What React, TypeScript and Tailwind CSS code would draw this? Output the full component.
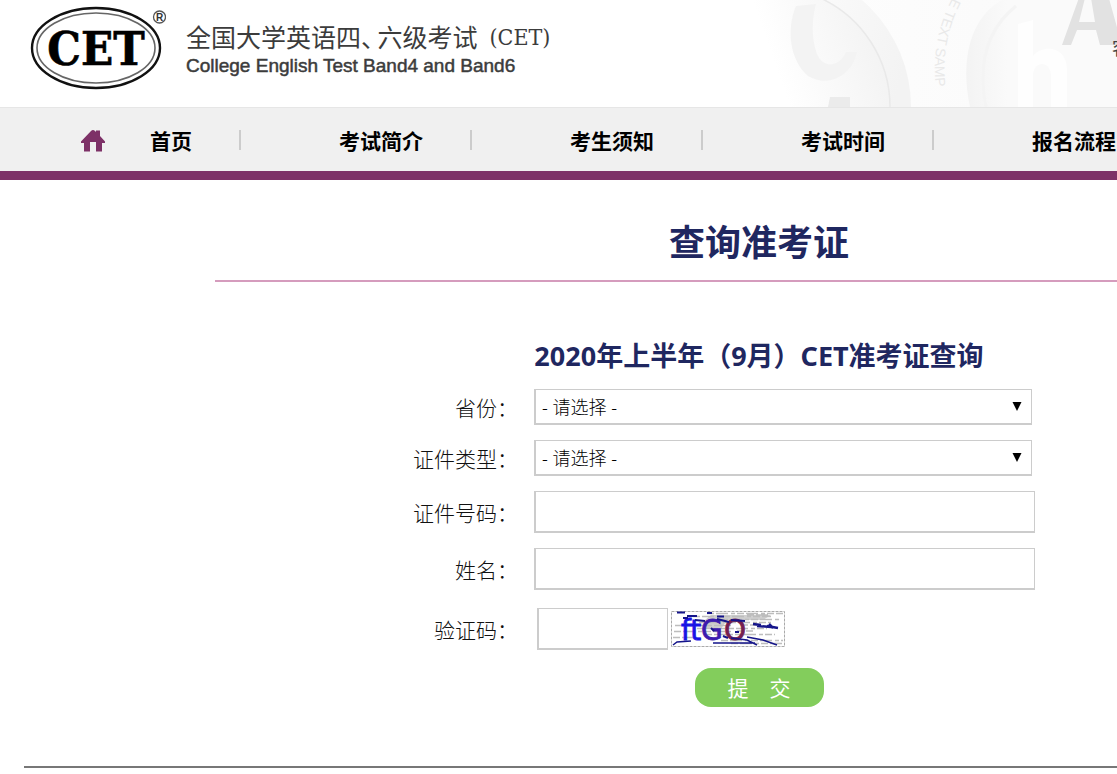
import type { ReactNode } from "react";

const NAV = ["考试简介", "考生须知", "考试时间", "报名流程"];

function Logo() {
  return (
    <svg viewBox="0 0 136 86" className="h-[86px] w-[136px] shrink-0" role="img" aria-label="CET">
      <ellipse cx="66" cy="43" rx="64" ry="40" fill="#fff" stroke="#111" strokeWidth="2.4" />
      <ellipse cx="66" cy="43" rx="59" ry="35" fill="none" stroke="#666" strokeWidth="1.6" />
      <text
        x="66"
        y="60"
        textAnchor="middle"
        fill="#000"
        stroke="#000"
        strokeWidth="0.6"
        className="font-['DejaVu_Serif_Condensed','DejaVu_Serif',serif] text-[47px] font-bold"
      >
        CET
      </text>
      <circle cx="129.5" cy="12" r="6" fill="#fff" stroke="#555" strokeWidth="1.3" />
      <text x="129.5" y="15.5" textAnchor="middle" fill="#333" className="font-['Liberation_Sans',sans-serif] text-[10px] font-bold">
        R
      </text>
    </svg>
  );
}

function HeaderArt() {
  return (
    <svg viewBox="0 0 417 107" className="absolute top-0 left-[700px] h-[107px] w-[417px]" aria-hidden="true">
      <defs>
        <linearGradient id="wash" x1="0" x2="1">
          <stop offset="0" stopColor="#fff" />
          <stop offset="0.5" stopColor="#fcfcfc" />
          <stop offset="1" stopColor="#f9f9f9" />
        </linearGradient>
        <linearGradient id="rim" gradientUnits="userSpaceOnUse" x1="50" x2="211" y1="0" y2="40">
          <stop offset="0" stopColor="#fff" />
          <stop offset="1" stopColor="#f3f3f3" />
        </linearGradient>
        <linearGradient id="disc" gradientUnits="userSpaceOnUse" x1="80" x2="195" y1="80" y2="40">
          <stop offset="0" stopColor="#fff" />
          <stop offset="1" stopColor="#f1f1f1" />
        </linearGradient>
        <linearGradient id="ringFill" gradientUnits="userSpaceOnUse" x1="265" x2="350" y1="0" y2="0">
          <stop offset="0" stopColor="#f3f3f3" />
          <stop offset="0.5" stopColor="#fafafa" />
          <stop offset="1" stopColor="#fafafa" />
        </linearGradient>
        <path id="ring" d="M281 -40 A150 150 0 0 0 246 125" />
      </defs>
      <rect width="417" height="107" fill="url(#wash)" />
      <circle cx="70" cy="107" r="141" fill="url(#rim)" />
      <circle cx="70" cy="107" r="120" fill="url(#disc)" />
      <path d="M118 -3 A120 120 0 0 1 190 107" fill="none" stroke="#e9e9e9" strokeWidth="1.5" />
      <path d="M96 6 C86 30 90 60 108 76 C128 88 152 76 157 52 L146 52 C140 66 124 70 117 54 C111 38 112 18 116 4 Z" fill="#f3f3f3" />
      <path d="M130 97h20v10h-22z" fill="#ebebeb" />
      <path d="M270 107 C260 60 270 18 302 0 H417 V107 Z" fill="url(#ringFill)" />
      <path d="M286 107 C278 66 286 30 316 6" fill="none" stroke="#f4f4f4" strokeWidth="3" />
      <path d="M318 24v83h15V76c0-16 18-16 18 0v31h16V70c0-24-24-26-34-14V20z" fill="#fefefe" />
      <text fill="#e9e9e9" className="font-['Liberation_Sans',sans-serif] text-[14px]">
        <textPath href="#ring">SAMPLE TEXT SAMP</textPath>
      </text>
      <path d="M362 45 L380 -5 H408 L422 45 H400 L396 30 H377 L371 45 Z M379 22 L385 -2 H391 L395 22 Z" fill="#e2e2e2" fillRule="evenodd" />
    </svg>
  );
}

function HomeIcon() {
  return (
    <svg viewBox="0 0 24 22" className="h-[22px] w-6 shrink-0" fill="#7d3167" aria-hidden="true">
      <path d="M0 11.5 L10 1 Q12 -0.8 14 1 L15 2 V0.5 H19 V6 L24 11.5 V13 H21 V21.5 H15 V12 H9 V21.5 H3 V13 H0 Z" />
    </svg>
  );
}

function Captcha() {
  return (
    <svg viewBox="0 0 114 36" className="h-9 w-[114px] shrink-0" role="img" aria-label="ftGO">
      <rect x="0.5" y="0.5" width="113" height="35" fill="#fff" stroke="#aaa" strokeDasharray="3 1" />
      <path d="M40 4H100L92 9H56L50 18H34V9Z" fill="#cfcfcf" />
      <g stroke="#bdbdbd" strokeWidth="1.4" strokeDasharray="7 2 12 3 4 2">
        <path d="M36 2.5H112M22 5.5H100M50 8.5H110M28 11.5H100M4 14.5H60M26 17.5H96M3 20.5H60M34 23.5H104M2 26.5H24M50 29.5H112M60 32.5H112M76 4H98M38 10H52M70 14H90M66 20H82" />
      </g>
      <g className="font-['DejaVu_Sans',sans-serif] text-[28px]" strokeWidth="0.8">
        <text x="10" y="29" fill="#1713e5" stroke="#1713e5">ft</text>
        <text x="30" y="29" fill="#3c1bae" stroke="#3c1bae">G</text>
        <text x="53" y="29" fill="#74204f" stroke="#74204f">O</text>
      </g>
      <g stroke="#15158a" fill="none">
        <path d="M6 1.5h8M16 5h10M12 7h5M24 9l10 1M36 2h5M46 5.5h7M46 8l12 3M60 9l14 1" strokeWidth="2" />
        <path d="M82 13l8 1M86 15l14 1M96 15l11 2M98 13l4 4" strokeWidth="2.5" />
        <path d="M2 34l4-3 14-1M42 32h42M60 27l16 2 10 5M76 26l16 3 14 5" strokeWidth="1.5" />
        <path d="M40 17l3 3M64 21h4M52 25l5 2" strokeWidth="2" />
      </g>
    </svg>
  );
}

function Row({ id, label, children }: { id: string; label: string; children: ReactNode }) {
  return (
    <div className="flex items-center gap-4">
      <label htmlFor={id} className="w-[303px] shrink-0 pt-0.5 text-right text-[21px] leading-7 font-light text-[#111]">
        {label}：
      </label>
      {children}
    </div>
  );
}

function Select({ id }: { id: string }) {
  return (
    <div className="relative w-[498px]">
      <select
        id={id}
        className="block h-9 w-full appearance-none rounded-none border-2 border-t border-r border-[#ccc] bg-white px-1.5 pt-0.5 text-[18px] font-light text-black"
      >
        <option>- 请选择 -</option>
      </select>
      <svg viewBox="0 0 10 9" className="pointer-events-none absolute top-[13px] right-2.5 h-[9px] w-2.5" aria-hidden="true">
        <path d="M0.5 0h9L5 9z" fill="#000" />
      </svg>
    </div>
  );
}

const inputClass = "h-[42px] rounded-none border-2 border-t border-r border-[#ccc] bg-white px-2 text-[18px] outline-none";

export default function App() {
  return (
    <div className="overflow-x-hidden bg-white font-['Noto_Sans','Noto_Sans_CJK_SC',sans-serif]">
      <div className="min-w-[1518px]">
        <header className="relative flex h-[107px] items-start">
          <HeaderArt />
          <div className="relative flex items-start gap-5 pt-[5px] pl-[30px]">
            <Logo />
            <div className="pt-4 text-[#3c3c3c]">
              <p className="flex text-[25px] leading-8 whitespace-nowrap">
                <span className="[font-feature-settings:'halt']">全国大学英语四、</span>
                <span className="pl-1">六级考试</span>
                <span className="pl-3 font-['DejaVu_Serif_Condensed','DejaVu_Serif',serif] text-[23px]">(CET)</span>
              </p>
              <p className="pt-px font-['Liberation_Sans',sans-serif] text-[19px] leading-6 whitespace-nowrap [-webkit-text-stroke:0.5px_#3c3c3c]">
                College English Test Band4 and Band6
              </p>
            </div>
          </div>
          <a href="#service" className="absolute top-9 left-[1112px] text-[18px] leading-6 text-[#444]">
            客
          </a>
        </header>

        <nav className="flex h-[73px] items-center overflow-hidden border-t border-b-9 border-t-[#e6e6e6] border-b-[#7d3167] bg-[#f0f0f0] pt-0.5 text-[21px] leading-8 font-bold whitespace-nowrap text-black">
          <a href="#home" className="flex w-[239px] items-center gap-[45px] pl-[81px]">
            <HomeIcon />
            首页
          </a>
          {NAV.map((name) => (
            <div key={name} className="flex w-[231px] shrink-0 items-center">
              <span className="mb-0.5 h-5 w-0.5 bg-[#ccc]" />
              <a href={"#" + name} className="pl-[98px]">
                {name}
              </a>
            </div>
          ))}
        </nav>

        <main className="mx-auto w-[1088px]">
          <h1 className="border-b-2 border-[#d59cbd] pt-[42px] pb-4 text-center text-[36px] leading-[42px] font-bold text-[#1f2760]">
            查询准考证
          </h1>
          <h2 className="pt-14 pb-[15px] text-center text-[27px] leading-9 font-bold text-[#1f2760]">
            2020年上半年（9月）CET准考证查询
          </h2>
          <form className="flex flex-col gap-[15px]" onSubmit={(e) => e.preventDefault()}>
            <Row id="province" label="省份">
              <Select id="province" />
            </Row>
            <Row id="idtype" label="证件类型">
              <Select id="idtype" />
            </Row>
            <Row id="idnumber" label="证件号码">
              <input id="idnumber" type="text" className={inputClass + " w-[501px]"} />
            </Row>
            <Row id="fullname" label="姓名">
              <input id="fullname" type="text" className={inputClass + " w-[501px]"} />
            </Row>
            <div className="pt-[3px]">
              <Row id="code" label="验证码">
                <div className="flex items-center gap-[3px] pl-[3px]">
                  <input id="code" type="text" className={inputClass + " w-[131px]"} />
                  <Captcha />
                </div>
              </Row>
            </div>
            <div className="flex justify-center pt-[3px]">
              <button type="submit" className="h-[39px] w-[129px] rounded-2xl bg-[#83cd5c] text-[21px] leading-8 whitespace-pre text-white">
                提　交
              </button>
            </div>
          </form>
        </main>

        <footer className="mx-6 mt-[59px] border-t-2 border-[#777] pb-[6px]" />
      </div>
    </div>
  );
}
